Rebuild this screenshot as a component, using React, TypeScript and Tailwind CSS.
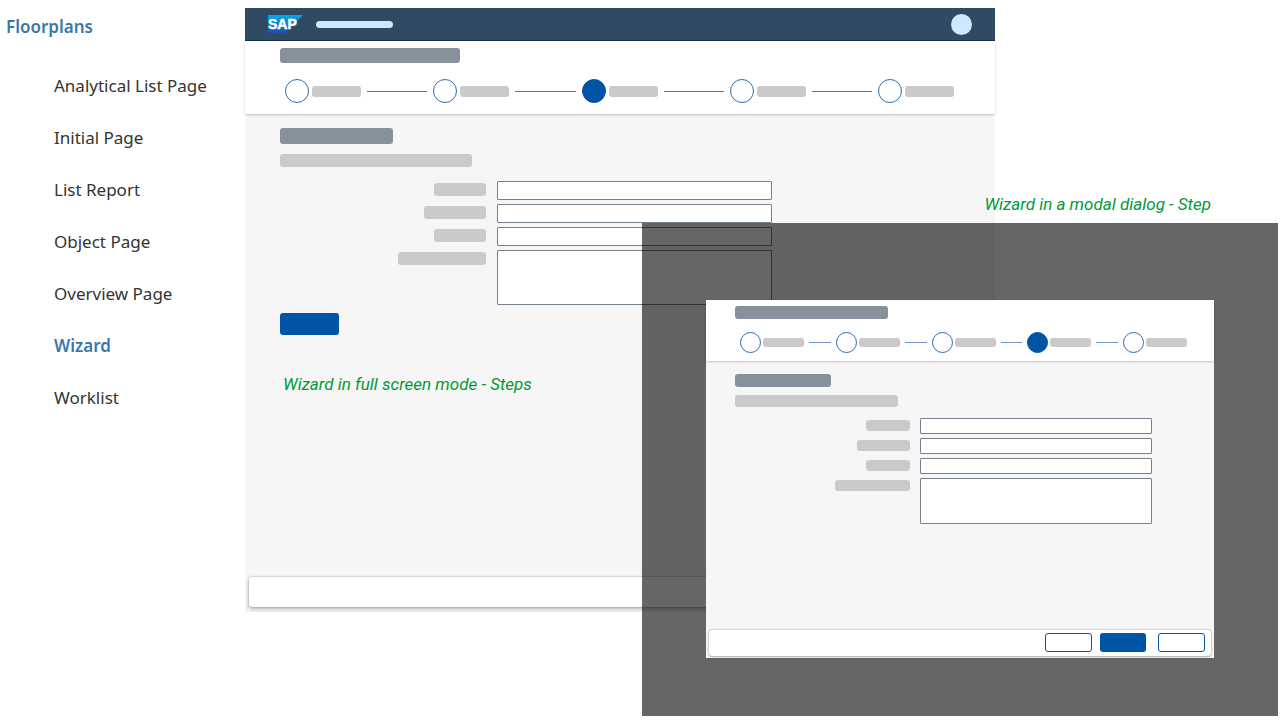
import React from "react"
import clsx from "clsx"

const pages = [
  "Analytical List Page",
  "Initial Page",
  "List Report",
  "Object Page",
  "Overview Page",
  "Wizard",
  "Worklist",
]

const fields = [
  { name: "Field 1", big: "w-[52px]", small: "w-[44px]" },
  { name: "Field 2", big: "w-[62px]", small: "w-[53px]" },
  { name: "Field 3", big: "w-[52px]", small: "w-[44px]" },
  { name: "Description", big: "w-[88px]", small: "w-[75px]", multiline: true },
]

const SapLogo = () => (
  <svg width="35" height="18" viewBox="0 0 35 18" role="img" aria-label="SAP">
    <defs>
      <linearGradient id="sap" x1="0" y1="0" x2="0" y2="1">
        <stop offset="0" stopColor="#00a9e8" />
        <stop offset="0.5" stopColor="#0f80cc" />
        <stop offset="1" stopColor="#1f4fa8" />
      </linearGradient>
    </defs>
    <path d="M0 0h35L17.5 18H0z" fill="url(#sap)" />
    <text
      x="0"
      y="14"
      fontFamily="'Liberation Sans', sans-serif"
      fontSize="14"
      fontWeight="700"
      fill="#fff"
      stroke="#fff"
      strokeWidth="0.5"
    >
      SAP
    </text>
  </svg>
)

const Steps = ({ current, compact }: { current: number; compact?: boolean }) => (
  <ol className={clsx("ml-[5px] flex", compact ? "mt-[13px]" : "mt-4")}>
    {[0, 1, 2, 3, 4].map((step) => (
      <li key={step} className={clsx("flex items-center", step < 4 && "flex-1")}>
        <span
          className={clsx(
            "shrink-0 rounded-full border",
            compact ? "size-[21px]" : "size-6",
            step === current ? "border-[#0054a6] bg-[#0054a6]" : "border-[#2a6cb0] bg-white"
          )}
        />
        <span
          className={clsx(
            "shrink-0 rounded-[3px] bg-[#cacaca]",
            compact ? "ml-[2px] h-[9px] w-[41px]" : "ml-[3px] h-[11px] w-[49px]"
          )}
        />
        {step < 4 && (
          <span
            className={clsx(
              "h-px flex-1",
              compact ? "mx-[5px] bg-[#6f97cc]" : "mx-[6px] bg-[#4a75b0]"
            )}
          />
        )}
      </li>
    ))}
  </ol>
)

const WizardHeader = ({ current, compact }: { current: number; compact?: boolean }) => (
  <header
    className={clsx(
      "relative bg-white shadow-[0_1px_2px_rgba(0,0,0,0.22)]",
      compact ? "pt-[6px] pr-[27px] pb-2 pl-[29px]" : "pt-[7px] pr-[41px] pb-[11px] pl-[35px]"
    )}
  >
    <div
      className={clsx(
        "rounded-[3px] bg-[#87919b]",
        compact ? "h-[13px] w-[153px]" : "h-[15px] w-[180px]"
      )}
    />
    <Steps current={current} compact={compact} />
  </header>
)

const WizardForm = ({ compact }: { compact?: boolean }) => {
  const box = "block w-full rounded-[1px] border border-[#74808b] bg-white outline-none"
  return (
    <>
      <div
        className={clsx(
          "rounded-[3px] bg-[#87919b]",
          compact ? "h-[13px] w-[96px]" : "h-4 w-[113px]"
        )}
      />
      <div
        className={clsx(
          "rounded-[3px] bg-[#cacaca]",
          compact ? "mt-2 h-[12px] w-[163px]" : "mt-[10px] h-[13px] w-[192px]"
        )}
      />
      <form className={clsx("flex flex-col gap-1", compact ? "mt-[11px] mr-[33px]" : "mt-[14px] mr-[188px]")}>
        {fields.map((field) => (
          <label
            key={field.name}
            className={clsx(
              "grid",
              compact ? "grid-cols-[175px_1fr] gap-[10px]" : "grid-cols-[206px_1fr] gap-[11px]"
            )}
          >
            <span
              className={clsx(
                "mt-[2px] justify-self-end rounded-[3px] bg-[#cacaca]",
                compact ? "h-[11px]" : "h-[13px]",
                compact ? field.small : field.big
              )}
            />
            {field.multiline ? (
              <textarea
                aria-label={field.name}
                className={clsx(box, "resize-none", compact ? "h-[46px]" : "h-[55px]")}
              />
            ) : (
              <input
                type="text"
                aria-label={field.name}
                className={clsx(box, compact ? "h-4" : "h-[19px]")}
              />
            )}
          </label>
        ))}
      </form>
    </>
  )
}

const FullScreenWizard = () => (
  <section className="mr-[285px] bg-[#f6f6f6]">
    <div className="flex h-[33px] items-center border-b border-[#14304b] bg-[#2f4a62] pr-[23px] pl-[23px]">
      <SapLogo />
      <span className="ml-[13px] h-[7px] w-[77px] rounded-full bg-[#cde8ff]" />
      <span className="ml-auto size-[21px] rounded-full bg-[#cde8ff]" />
    </div>
    <WizardHeader current={2} />
    <div className="flex min-h-[498px] flex-col">
      <div className="px-[35px] pt-[14px]">
        <WizardForm />
        <button
          type="button"
          aria-label="Next step"
          className="mt-2 block h-[22px] w-[59px] rounded-[3px] bg-[#0054a6]"
        />
        <p className="mt-[37px] pl-[3px] font-['Roboto',sans-serif] text-[17px] leading-6 text-[#009a35] italic">
          Wizard in full screen mode - Steps
        </p>
      </div>
      <footer className="mx-1 mt-auto mb-[5px] h-[30px] rounded-[3px] bg-white shadow-[0_0_2px_rgba(0,0,0,0.35),0_2px_4px_rgba(0,0,0,0.25)]" />
    </div>
  </section>
)

const ModalWizard = () => (
  <figure className="absolute top-[192px] right-[2px] left-[397px]">
    <figcaption className="pr-[67px] pb-[7px] text-right font-['Roboto',sans-serif] text-[17px] leading-6 text-[#009a35] italic">
      Wizard in a modal dialog - Step
    </figcaption>
    <div className="bg-black/60 px-16 pt-[77px] pb-[58px]">
      <div role="dialog" aria-label="Wizard" className="bg-[#f6f6f6]">
        <WizardHeader current={3} compact />
        <div className="flex min-h-[297px] flex-col">
          <div className="px-[29px] pt-[13px]">
            <WizardForm compact />
          </div>
          <footer className="mx-[3px] mt-auto mb-[2px] flex h-[26px] items-center rounded-[3px] bg-white pr-[6px] pb-px shadow-[0_0_2px_rgba(0,0,0,0.4),0_1px_2px_rgba(0,0,0,0.2)]">
            <button
              type="button"
              aria-label="Back"
              className="ml-auto h-[19px] w-[47px] rounded-[3px] border border-[#0054a6] bg-white"
            />
            <button
              type="button"
              aria-label="Next"
              className="ml-2 h-[19px] w-[46px] rounded-[3px] bg-[#0054a6]"
            />
            <button
              type="button"
              aria-label="Cancel"
              className="ml-3 h-[19px] w-[47px] rounded-[3px] border border-[#0054a6] bg-white"
            />
          </footer>
        </div>
      </div>
    </div>
  </figure>
)

const App = () => {
  return (
    <div className="flex min-h-screen bg-white">
      <nav className="w-[245px] shrink-0 pt-[15px] pl-[6px] font-['Noto_Sans',sans-serif] text-[17px] leading-6 text-[#333]">
        <h2 className="font-semibold text-[#3a78ab]">Floorplans</h2>
        <ul className="mt-[35px] flex flex-col gap-7 pl-12">
          {pages.map((page) => (
            <li key={page}>
              <a href="#" className={clsx(page === "Wizard" && "font-semibold text-[#3a78ab]")}>
                {page}
              </a>
            </li>
          ))}
        </ul>
      </nav>
      <main className="relative flex-1 pt-2">
        <FullScreenWizard />
        <ModalWizard />
      </main>
    </div>
  )
}

export default App
